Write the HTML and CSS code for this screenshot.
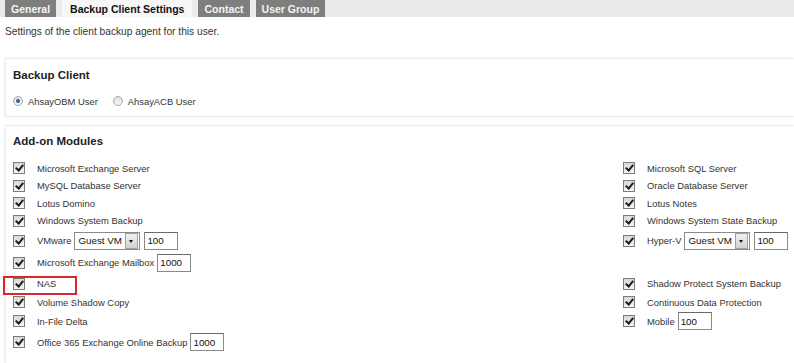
FILE: index.html
```html
<!DOCTYPE html>
<html lang="en">
<head>
    <meta charset="UTF-8">
    <title>Backup Client Settings</title>
    <link rel="stylesheet" href="styles.css">
</head>
<body>

    <div class="tabs">
        <span class="tab">General</span>
        <span class="tab active">Backup Client Settings</span>
        <span class="tab">Contact</span>
        <span class="tab">User Group</span>
    </div>

    <p class="intro">Settings of the client backup agent for this user.</p>

    <div class="panel">
        <h3>Backup Client</h3>
        <div class="radios">
            <label><span class="rd on"></span>AhsayOBM User</label>
            <label><span class="rd"></span>AhsayACB User</label>
        </div>
    </div>

    <div class="panel modules">
        <h3>Add-on Modules</h3>
        <div class="grid">
            <div class="row"><label class="item"><span class="cb"></span>Microsoft Exchange Server</label></div>
            <div class="row"><label class="item"><span class="cb"></span>Microsoft SQL Server</label></div>

            <div class="row"><label class="item"><span class="cb"></span>MySQL Database Server</label></div>
            <div class="row"><label class="item"><span class="cb"></span>Oracle Database Server</label></div>

            <div class="row"><label class="item"><span class="cb"></span>Lotus Domino</label></div>
            <div class="row"><label class="item"><span class="cb"></span>Lotus Notes</label></div>

            <div class="row"><label class="item"><span class="cb"></span>Windows System Backup</label></div>
            <div class="row"><label class="item"><span class="cb"></span>Windows System State Backup</label></div>

            <div class="row ctrl">
                <label class="item"><span class="cb"></span>VMware</label>
                <span class="select">Guest VM<span class="arrow"></span></span>
                <span class="field">100</span>
            </div>
            <div class="row ctrl">
                <label class="item"><span class="cb"></span>Hyper-V</label>
                <span class="select">Guest VM<span class="arrow"></span></span>
                <span class="field">100</span>
            </div>

            <div class="row ctrl">
                <label class="item"><span class="cb"></span>Microsoft Exchange Mailbox</label>
                <span class="field">1000</span>
            </div>
            <div class="row ctrl"></div>

            <div class="row mid">
                <label class="item"><span class="cb"></span>NAS</label>
                <span class="mark"></span>
            </div>
            <div class="row mid"><label class="item"><span class="cb"></span>Shadow Protect System Backup</label></div>

            <div class="row"><label class="item"><span class="cb"></span>Volume Shadow Copy</label></div>
            <div class="row"><label class="item"><span class="cb"></span>Continuous Data Protection</label></div>

            <div class="row mid"><label class="item"><span class="cb"></span>In-File Delta</label></div>
            <div class="row mid">
                <label class="item"><span class="cb"></span>Mobile</label>
                <span class="field">100</span>
            </div>

            <div class="row ctrl">
                <label class="item"><span class="cb"></span>Office 365 Exchange Online Backup</label>
                <span class="field">1000</span>
            </div>
            <div class="row ctrl"></div>
        </div>
    </div>

</body>
</html>
```

FILE: styles.css
```css
/* --- page --- */
body {
    margin: 0;
    font-family: "Liberation Sans", Arial, sans-serif;
    font-size: 9.4px;
    color: #333;
    background: #fff;
    overflow: hidden;
}

/* --- tabs --- */
.tabs {
    display: flex;
    gap: 6px;
    height: 17px;
    padding-left: 5px;
    background: #ebebeb;
}

.tab {
    display: flex;
    align-items: center;
    padding: 0 6px;
    font-size: 10.5px;
    font-weight: bold;
    color: #f4f4f4;
    background: #7e7e7e;
}

.tab.active {
    padding: 0 8px;
    color: #111;
    background: #f7f7f7;
}

.intro {
    margin: 0;
    padding: 8px 0 0 5px;
    line-height: 13px;
    font-size: 10.2px;
}

/* --- panels (open on the right, they run on past the window) --- */
.panel {
    margin: 20px 0 0 5px;
    padding: 9px 7px 8px;
    border: 1px solid #ececec;
    border-right: none;
    box-shadow: -1px 0 3px rgba(0, 0, 0, 0.06);
}

.panel h3 {
    margin: 0 0 12px;
    line-height: 14px;
    font-size: 11.5px;
    color: #222;
}

.modules {
    margin-top: 8px;
    padding-top: 8px;
    padding-bottom: 10px;
    border-bottom: none;
}

.modules h3 {
    margin-bottom: 11.5px;
}

.radios {
    display: flex;
    gap: 15px;
    height: 14px;
    align-items: center;
}

.radios label {
    display: flex;
    align-items: center;
    gap: 5px;
}

.rd {
    width: 8px;
    height: 8px;
    border: 1px solid #a8a8a8;
    border-radius: 50%;
    background: linear-gradient(#dcdcdc, #f6f6f6);
    position: relative;
}

.rd.on::after {
    content: '';
    position: absolute;
    left: 2px;
    top: 2px;
    width: 4px;
    height: 4px;
    border-radius: 50%;
    background: #2f5f9e;
}

/* --- module grid --- */
.grid {
    display: grid;
    grid-template-columns: 610px 1fr;
}

.row {
    display: flex;
    align-items: center;
    height: 17.5px;
    position: relative;
}

.row.ctrl {
    height: 22px;
}

.row.mid {
    height: 20px;
}

.item {
    display: flex;
    align-items: center;
    gap: 12px;
    margin-right: 3px;
    white-space: nowrap;
}

.cb {
    width: 10px;
    height: 10px;
    border: 1px solid #7c7c7c;
    background: linear-gradient(#d8d8d8, #f4f4f4);
    position: relative;
    flex: none;
}

.cb::after {
    content: '';
    position: absolute;
    left: 3px;
    top: 0;
    width: 3px;
    height: 6px;
    border-right: 2px solid #1c1c1c;
    border-bottom: 2px solid #1c1c1c;
    transform: rotate(40deg);
}

.select {
    display: flex;
    align-items: center;
    width: 61px;
    height: 16px;
    padding-left: 3px;
    margin-right: 4px;
    border: 1px solid #8a8a8a;
    background: #fff;
    font-size: 9.8px;
    color: #111;
    position: relative;
}

.arrow {
    position: absolute;
    right: 1px;
    top: 0;
    width: 11px;
    height: 14px;
    border: 1px solid #a0a0a0;
    background: linear-gradient(#f0f0f0, #d2d2d2);
}

.arrow::after {
    content: '';
    position: absolute;
    left: 3px;
    top: 6px;
    border-left: 2.5px solid transparent;
    border-right: 2.5px solid transparent;
    border-top: 3px solid #111;
}

.field {
    display: flex;
    align-items: center;
    width: 30px;
    height: 16px;
    padding-left: 2px;
    border: 1px solid #8a8a8a;
    border-top-color: #6a6a6a;
    background: #fff;
    font-size: 9.8px;
    color: #111;
}

/* red highlight round the NAS row */
.mark {
    position: absolute;
    left: -10px;
    top: 2px;
    width: 70px;
    height: 15px;
    border: 2px solid #d8262d;
}
```
